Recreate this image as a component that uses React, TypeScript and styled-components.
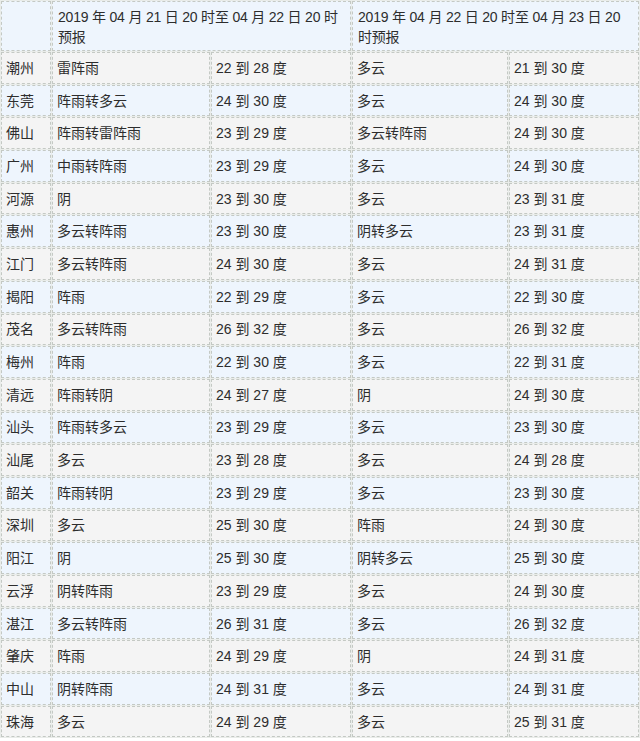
import React from "react";
import styled, { createGlobalStyle } from "styled-components";

const Global = createGlobalStyle`
  html, body { margin: 0; padding: 0; background: #ffffff; }
  body { font-family: "Liberation Sans", "Noto Sans CJK SC", sans-serif; }
`;

const Table = styled.table`
  width: 640px;
  table-layout: fixed;
  border-collapse: separate;
  border-spacing: 1px;
  font-family: "Liberation Sans", "Noto Sans CJK SC", sans-serif;
  font-size: 14px;
  color: #2d2d2d;
  background: #e9ece9;
`;

const Col = styled.col<{ $w: number }>`
  width: ${(p) => p.$w}px;
`;

const Cell = styled.td<{ $alt?: boolean }>`
  border: 1px dashed #c4c9c4;
  background: ${(p) => (p.$alt ? "#eef5fd" : "#f4f4f4")};
  padding: 0 5px 0 4px;
  height: 29.7px;
  line-height: 20px;
  white-space: nowrap;
  overflow: hidden;
  vertical-align: middle;
`;

const HeadCell = styled.th`
  border: 1px dashed #c4c9c4;
  background: #eef5fd;
  padding: 5px 4px 3px 5px;
  height: 40px;
  line-height: 20px;
  font-weight: normal;
  text-align: left;
  vertical-align: top;
  white-space: normal;
  letter-spacing: -0.2px;
`;

type Row = [string, string, string, string, string];

const rows: Row[] = [
  ["潮州", "雷阵雨", "22 到 28 度", "多云", "21 到 30 度"],
  ["东莞", "阵雨转多云", "24 到 30 度", "多云", "24 到 30 度"],
  ["佛山", "阵雨转雷阵雨", "23 到 29 度", "多云转阵雨", "24 到 30 度"],
  ["广州", "中雨转阵雨", "23 到 29 度", "多云", "24 到 30 度"],
  ["河源", "阴", "23 到 30 度", "多云", "23 到 31 度"],
  ["惠州", "多云转阵雨", "23 到 30 度", "阴转多云", "23 到 31 度"],
  ["江门", "多云转阵雨", "24 到 30 度", "多云", "24 到 31 度"],
  ["揭阳", "阵雨", "22 到 29 度", "多云", "22 到 30 度"],
  ["茂名", "多云转阵雨", "26 到 32 度", "多云", "26 到 32 度"],
  ["梅州", "阵雨", "22 到 30 度", "多云", "22 到 31 度"],
  ["清远", "阵雨转阴", "24 到 27 度", "阴", "24 到 30 度"],
  ["汕头", "阵雨转多云", "23 到 29 度", "多云", "23 到 30 度"],
  ["汕尾", "多云", "23 到 28 度", "多云", "24 到 28 度"],
  ["韶关", "阵雨转阴", "23 到 29 度", "多云", "23 到 30 度"],
  ["深圳", "多云", "25 到 30 度", "阵雨", "24 到 30 度"],
  ["阳江", "阴", "25 到 30 度", "阴转多云", "25 到 30 度"],
  ["云浮", "阴转阵雨", "23 到 29 度", "多云", "24 到 30 度"],
  ["湛江", "多云转阵雨", "26 到 31 度", "多云", "26 到 32 度"],
  ["肇庆", "阵雨", "24 到 29 度", "阴", "24 到 31 度"],
  ["中山", "阴转阵雨", "24 到 31 度", "多云", "24 到 31 度"],
  ["珠海", "多云", "24 到 29 度", "多云", "25 到 31 度"],
];

const widths = [50, 158, 140, 156, 130];

export default function App() {
  return (
    <>
      <Global />
      <Table>
        <colgroup>
          {widths.map((w, i) => (
            <Col key={i} $w={w} />
          ))}
        </colgroup>
        <thead>
          <tr>
            <HeadCell />
            <HeadCell colSpan={2}>2019 年 04 月 21 日 20 时至 04 月 22 日 20 时预报</HeadCell>
            <HeadCell colSpan={2}>2019 年 04 月 22 日 20 时至 04 月 23 日 20 时预报</HeadCell>
          </tr>
        </thead>
        <tbody>
          {rows.map((r, i) => (
            <tr key={r[0]}>
              {r.map((c, j) => (
                <Cell key={j} $alt={i % 2 === 1}>
                  {c}
                </Cell>
              ))}
            </tr>
          ))}
        </tbody>
      </Table>
    </>
  );
}
